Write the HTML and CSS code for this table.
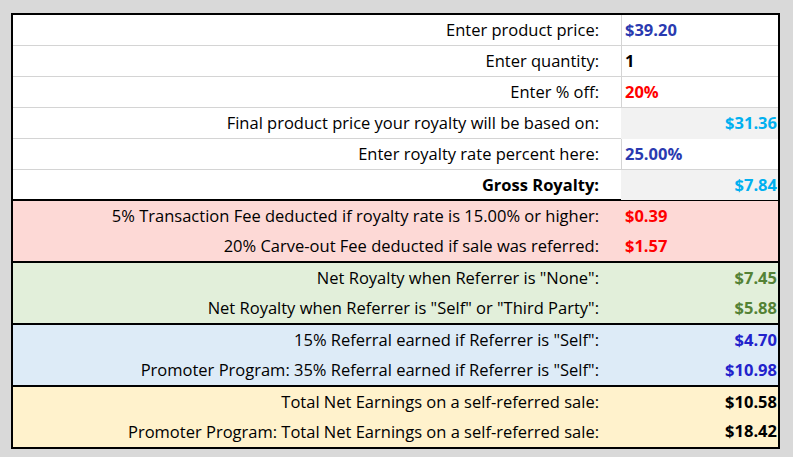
FILE: index.html
```html
<!DOCTYPE html>
<html>
<head>
<meta charset="utf-8">
<link rel="stylesheet" href="styles.css">
</head>
<body>
<div class="sheet">
  <section class="group white">
    <div class="row"><div class="label">Enter product price:</div><div class="value left c-blue">$39.20</div></div>
    <div class="row"><div class="label">Enter quantity:</div><div class="value left c-black">1</div></div>
    <div class="row"><div class="label">Enter % off:</div><div class="value left c-red">20%</div></div>
    <div class="row"><div class="label">Final product price your royalty will be based on:</div><div class="value right fill c-sky">$31.36</div></div>
    <div class="row"><div class="label">Enter royalty rate percent here:</div><div class="value left c-blue">25.00%</div></div>
    <div class="row last"><div class="label bold">Gross Royalty:</div><div class="value right fill c-sky">$7.84</div></div>
  </section>
  <section class="group pink">
    <div class="row"><div class="label">5% Transaction Fee deducted if royalty rate is 15.00% or higher:</div><div class="value left c-red">$0.39</div></div>
    <div class="row"><div class="label">20% Carve-out Fee deducted if sale was referred:</div><div class="value left c-red">$1.57</div></div>
  </section>
  <section class="group green">
    <div class="row"><div class="label">Net Royalty when Referrer is "None":</div><div class="value right c-green">$7.45</div></div>
    <div class="row"><div class="label">Net Royalty when Referrer is "Self" or "Third Party":</div><div class="value right c-green">$5.88</div></div>
  </section>
  <section class="group blue">
    <div class="row"><div class="label">15% Referral earned if Referrer is "Self":</div><div class="value right c-navy">$4.70</div></div>
    <div class="row"><div class="label">Promoter Program: 35% Referral earned if Referrer is "Self":</div><div class="value right c-navy">$10.98</div></div>
  </section>
  <section class="group yellow">
    <div class="row"><div class="label">Total Net Earnings on a self-referred sale:</div><div class="value right c-black">$10.58</div></div>
    <div class="row"><div class="label">Promoter Program: Total Net Earnings on a self-referred sale:</div><div class="value right c-black raised">$18.42</div></div>
  </section>
</div>
</body>
</html>
```
FILE: styles.css
```css
html, body {
  margin: 0;
  padding: 0;
  background: #d9d9d9;
}

body {
  padding: 13px 0 0 11px;
}

.sheet {
  width: 769px;
  box-sizing: border-box;
  border: 2px solid #000;
  background: #fff;
  font-family: "Open Sans", "Noto Sans", sans-serif;
  font-size: 16.5px;
  color: #000;
}

.group + .group {
  border-top: 2px solid #000;
}

.row {
  display: grid;
  grid-template-columns: 609px 156px;
  height: 30px;
  line-height: 30px;
}

.white .row {
  height: 30px;
  border-bottom: 1px solid #d4d4d4;
}

.white .row.last {
  height: 29px;
  border-bottom: 0;
}

.label {
  box-sizing: border-box;
  text-align: right;
  padding: 0 23px 0 0;
  white-space: nowrap;
}

.white .label {
  border-right: 1px solid #d4d4d4;
  padding-right: 22px;
}

.bold {
  font-weight: bold;
}

.value {
  font-weight: bold;
  white-space: nowrap;
}

.left {
  padding-left: 3px;
}

.right {
  text-align: right;
  padding-right: 1px;
}

.fill {
  background: #f2f2f2;
  margin-left: -1px;
  margin-bottom: -1px;
}

.last .fill {
  margin-bottom: 0;
}

.raised {
  line-height: 27px;
}

.pink { background: #fdd9d6; }
.green { background: #e2efda; }
.blue { background: #ddebf7; }
.yellow { background: #fff2cc; }

.c-blue { color: #2a3ab0; }
.c-black { color: #000; }
.c-red { color: #ff0000; }
.c-sky { color: #00b0f0; }
.c-green { color: #548235; }
.c-navy { color: #2222cc; }
```
